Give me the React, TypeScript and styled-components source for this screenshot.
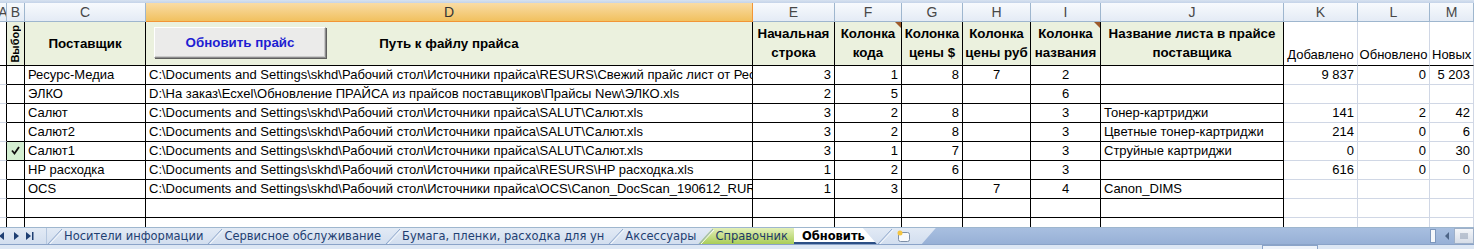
import React from 'react';
import styled, { createGlobalStyle, css } from 'styled-components';

const GlobalStyle = createGlobalStyle`
  html, body {
    margin: 0;
    padding: 0;
    background: #ffffff;
    overflow: hidden;
  }
  body {
    font-family: "Liberation Sans", Arial, sans-serif;
  }
`;

const COLS = [7, 18, 121, 607, 82, 67, 61, 68, 70, 183, 74, 72, 44];
const LETTERS = ['A', 'B', 'C', 'D', 'E', 'F', 'G', 'H', 'I', 'J', 'K', 'L', 'M'];

const Page = styled.div`
  width: 1474px;
  height: 249px;
  display: flex;
  flex-direction: column;
  overflow: hidden;
  background: #fff;
`;

const TopStrip = styled.div`
  height: 3px;
  background: linear-gradient(#d7e2f0, #c4d3e8);
`;

const Grid = styled.div`
  display: grid;
  grid-template-columns: ${COLS.map((c) => `${c}px`).join(' ')};
  grid-template-rows: 19px 44px repeat(8, 19px) 11px;
  overflow: hidden;
`;

const ColHead = styled.div<{ $selected?: boolean }>`
  box-sizing: border-box;
  display: flex;
  align-items: center;
  justify-content: center;
  overflow: hidden;
  font-size: 14px;
  color: #474747;
  border-right: 1px solid #9eb6ce;
  border-bottom: 1px solid #9eb6ce;
  background: linear-gradient(#f7fafd, #e4ebf5);
  ${(p) =>
    p.$selected &&
    css`
      background: linear-gradient(#f9dca5, #f1c15f);
      border-right-color: #f29536;
      border-bottom-color: #f29536;
      color: #333;
    `}
`;

type Edge = 'dark' | 'light';

const Cell = styled.div<{
  $right?: Edge;
  $bottom?: Edge;
  $align?: 'left' | 'right' | 'center';
  $bg?: string;
}>`
  box-sizing: border-box;
  display: flex;
  align-items: flex-end;
  justify-content: ${(p) =>
    p.$align === 'right' ? 'flex-end' : p.$align === 'center' ? 'center' : 'flex-start'};
  padding: 0 3px 1px 3px;
  font-size: 13px;
  line-height: 16px;
  color: #000;
  white-space: nowrap;
  overflow: hidden;
  background: ${(p) => p.$bg || '#fff'};
  border-right: 1px solid ${(p) => (p.$right === 'light' ? '#d0d7e5' : '#000')};
  border-bottom: 1px solid ${(p) => (p.$bottom === 'light' ? '#d0d7e5' : '#000')};
`;

const CheckCell = styled(Cell)`
  padding: 0;
  align-items: center;
  justify-content: center;
`;

const HeadCell = styled.div<{ $plain?: boolean; $cornerMark?: boolean }>`
  position: relative;
  box-sizing: border-box;
  display: flex;
  align-items: center;
  justify-content: center;
  text-align: center;
  padding: 0 2px;
  font-size: 13.33px;
  line-height: 19px;
  font-weight: bold;
  color: #000;
  background: #ebf1de;
  border-right: 1px solid #000;
  border-bottom: 1px solid #000;
  ${(p) =>
    p.$plain &&
    css`
      background: #fff;
      font-weight: normal;
      font-size: 13px;
      align-items: flex-end;
      padding: 0 2px 2px 2px;
      line-height: 16px;
      border-right-color: #d0d7e5;
      white-space: nowrap;
      overflow: hidden;
    `}
  ${(p) =>
    p.$cornerMark &&
    css`
      &::after {
        content: '';
        position: absolute;
        top: 0;
        right: 0;
        border-style: solid;
        border-width: 0 6px 6px 0;
        border-color: transparent #9c5a2a transparent transparent;
      }
    `}
`;

const VerticalLabel = styled.span`
  writing-mode: vertical-rl;
  transform: rotate(180deg);
  font-size: 11px;
  font-weight: bold;
  line-height: 13px;
`;

const UpdateButton = styled.button`
  position: absolute;
  left: 8px;
  top: 5px;
  width: 172px;
  height: 31px;
  box-sizing: border-box;
  font-family: "Liberation Sans", Arial, sans-serif;
  font-size: 13.33px;
  font-weight: bold;
  color: #1e1ed2;
  background: #ebebea;
  border: 1px solid;
  border-color: #ffffff #8c8c8c #8c8c8c #ffffff;
  box-shadow: 1px 1px 0 #5e5e5e, inset -1px -1px 0 #c9c9c9;
  padding: 0;
  cursor: pointer;
`;

/* ---------- sheet tabs ---------- */

const TabBar = styled.div`
  height: 16px;
  display: flex;
  align-items: stretch;
  background: linear-gradient(#e2eaf5, #d2deef);
  border-top: 1px solid #9eb6ce;
  font-family: "DejaVu Sans", Tahoma, sans-serif;
  font-size: 11.5px;
`;

const Nav = styled.div`
  width: 46px;
  display: flex;
  align-items: center;
  gap: 7px;
  border-right: 1px solid #b5c7df;
`;

const Tab = styled.div<{ $kind?: 'normal' | 'green' | 'active' }>`
  display: flex;
  align-items: center;
  padding-right: 4px;
  color: #1f3f72;
  white-space: nowrap;
  line-height: 15px;
  ${(p) =>
    p.$kind === 'green' &&
    css`
      background: linear-gradient(#e3f0b9, #a9cd58);
      clip-path: polygon(14px 0, 100% 0, 100% 100%, 0 100%);
      padding-right: 8px;
      margin-left: -2px;
      color: #1e3a66;
    `}
  ${(p) =>
    p.$kind === 'active' &&
    css`
      background: #fff;
      color: #000;
      font-weight: bold;
      padding-right: 12px;
      margin-left: -2px;
      clip-path: polygon(0 0, calc(100% - 14px) 0, 100% 100%, 0 100%);
      box-shadow: inset 0 -2px 0 #2c4f86;
    `}
`;

const ActiveGap = styled.span`
  width: 8px;
`;

const TabFill = styled.div`
  flex: 1;
  background: linear-gradient(#a8bfe0, #97b0d6);
  margin-left: 4px;
  clip-path: polygon(14px 0, 100% 0, 100% 100%, 0 100%);
`;

const ScrollArea = styled.div`
  width: 46px;
  display: flex;
  align-items: center;
  background: linear-gradient(#a8bfe0, #97b0d6);
`;

const Splitter = styled.div`
  width: 4px;
  height: 12px;
  margin-left: 2px;
  background: #f4f7fb;
  border: 1px solid #7d97bd;
`;

const ScrollBtn = styled.div`
  width: 18px;
  height: 14px;
  margin-left: auto;
  background: linear-gradient(#f4f6f9, #d6dde8);
  border: 1px solid #9eb0c9;
  display: flex;
  align-items: center;
  justify-content: center;
`;

const StatusStrip = styled.div`
  flex: 1;
  background: #dde7f4;
  border-top: 1px solid #8aa3c8;
  display: flex;
  align-items: flex-start;
`;

const StatusBox = styled.div<{ $left: number; $width: number }>`
  margin-left: ${(p) => p.$left}px;
  width: ${(p) => p.$width}px;
  height: 3px;
  border: 1px solid #8aa3c8;
  border-bottom: 0;
  background: #eef3fa;
`;

const Slant = () => (
  <svg width="17" height="16" viewBox="0 0 17 16" style={{ flexShrink: 0 }}>
    <line x1="1" y1="16" x2="15" y2="1" stroke="#8fa8cc" strokeWidth="1" />
    <line x1="3" y1="16" x2="16" y2="2" stroke="#f5f8fc" strokeWidth="1" />
  </svg>
);

const NewSheetIcon = () => (
  <svg width="20" height="14" viewBox="0 0 20 14">
    <rect x="4.5" y="3.5" width="11" height="9" rx="2" fill="#f7f9fc" stroke="#7d8fa8" />
    <circle cx="6" cy="4" r="2.5" fill="#f4c542" />
  </svg>
);

const Check = () => (
  <svg width="9" height="9" viewBox="0 0 9 9">
    <path d="M1 4.5 L3.5 7.5 L8 1" fill="none" stroke="#111" strokeWidth="1.8" />
  </svg>
);

type Row = {
  b?: boolean;
  c: string;
  d: string;
  e?: string;
  f?: string;
  g?: string;
  h?: string;
  i?: string;
  j?: string;
  k?: string;
  l?: string;
  m?: string;
};

const ROOT = 'C:\\Documents and Settings\\skhd\\Рабочий стол\\Источники прайса\\';

const ROWS: Row[] = [
  { c: 'Ресурс-Медиа', d: ROOT + 'RESURS\\Свежий прайс лист от Ресурс-Медиа.xls', e: '3', f: '1', g: '8', h: '7', i: '2', k: '9 837', l: '0', m: '5 203' },
  { c: 'ЭЛКО', d: 'D:\\На заказ\\Ecxel\\Обновление ПРАЙСА из прайсов поставщиков\\Прайсы New\\ЭЛКО.xls', e: '2', f: '5', i: '6' },
  { c: 'Салют', d: ROOT + 'SALUT\\Салют.xls', e: '3', f: '2', g: '8', i: '3', j: 'Тонер-картриджи', k: '141', l: '2', m: '42' },
  { c: 'Салют2', d: ROOT + 'SALUT\\Салют.xls', e: '3', f: '2', g: '8', i: '3', j: 'Цветные тонер-картриджи', k: '214', l: '0', m: '6' },
  { b: true, c: 'Салют1', d: ROOT + 'SALUT\\Салют.xls', e: '3', f: '1', g: '7', i: '3', j: 'Струйные картриджи', k: '0', l: '0', m: '30' },
  { c: 'HP расходка', d: ROOT + 'RESURS\\HP расходка.xls', e: '1', f: '2', g: '6', i: '3', k: '616', l: '0', m: '0' },
  { c: 'OCS', d: ROOT + 'OCS\\Canon_DocScan_190612_RUR.xls', e: '1', f: '3', h: '7', i: '4', j: 'Canon_DIMS' },
  { c: '', d: '' },
  { c: '', d: '' },
];

const DataRow = ({ row, last }: { row: Row; last?: boolean }) => {
  const bottom: Edge = last ? 'light' : 'dark';
  return (
    <>
      <Cell $right="dark" $bottom="light" />
      <CheckCell $bottom={bottom} $bg={row.b ? '#d4efd2' : undefined}>
        {row.b && <Check />}
      </CheckCell>
      <Cell $bottom={bottom}>{row.c}</Cell>
      <Cell $bottom={bottom}>{row.d}</Cell>
      <Cell $bottom={bottom} $align="right">{row.e}</Cell>
      <Cell $bottom={bottom} $align="right">{row.f}</Cell>
      <Cell $bottom={bottom} $align="right">{row.g}</Cell>
      <Cell $bottom={bottom} $align="center">{row.h}</Cell>
      <Cell $bottom={bottom} $align="center">{row.i}</Cell>
      <Cell $bottom={bottom}>{row.j}</Cell>
      <Cell $right="light" $bottom="light" $align="right">{row.k}</Cell>
      <Cell $right="light" $bottom="light" $align="right">{row.l}</Cell>
      <Cell $right="light" $bottom="light" $align="right">{row.m}</Cell>
    </>
  );
};

const TwoLine = ({ a, b }: { a: string; b: string }) => (
  <span>
    {a}
    <br />
    {b}
  </span>
);

export default function App() {
  return (
    <Page>
      <GlobalStyle />
      <TopStrip />
      <Grid>
        {LETTERS.map((l) => (
          <ColHead key={l} $selected={l === 'D'}>
            {l}
          </ColHead>
        ))}

        <Cell $right="dark" $bottom="dark" />
        <HeadCell>
          <VerticalLabel>Выбор</VerticalLabel>
        </HeadCell>
        <HeadCell>Поставщик</HeadCell>
        <HeadCell>
          <UpdateButton>Обновить прайс</UpdateButton>
          Путь к файлу прайса
        </HeadCell>
        <HeadCell>
          <TwoLine a="Начальная" b="строка" />
        </HeadCell>
        <HeadCell $cornerMark>
          <TwoLine a="Колонка" b="кода" />
        </HeadCell>
        <HeadCell>
          <TwoLine a="Колонка" b="цены $" />
        </HeadCell>
        <HeadCell>
          <TwoLine a="Колонка" b="цены руб" />
        </HeadCell>
        <HeadCell $cornerMark>
          <TwoLine a="Колонка" b="названия" />
        </HeadCell>
        <HeadCell>
          <TwoLine a="Название листа в прайсе" b="поставщика" />
        </HeadCell>
        <HeadCell $plain>Добавлено</HeadCell>
        <HeadCell $plain>Обновлено</HeadCell>
        <HeadCell $plain style={{ justifyContent: 'flex-start' }}>Новых</HeadCell>

        {ROWS.map((r, i) => (
          <DataRow key={i} row={r} last={i === ROWS.length - 1} />
        ))}
      </Grid>

      <TabBar>
        <Nav>
          <svg width="6" height="8" viewBox="0 0 6 8">
            <path d="M4 0 L-1 4 L4 8 Z" fill="#1f3f73" />
          </svg>
          <svg width="6" height="8" viewBox="0 0 6 8">
            <path d="M1 0 L6 4 L1 8 Z" fill="#1f3f73" />
          </svg>
          <svg width="8" height="8" viewBox="0 0 8 8">
            <path d="M0 0 L5 4 L0 8 Z" fill="#1f3f73" />
            <rect x="6" y="0" width="1.5" height="8" fill="#1f3f73" />
          </svg>
        </Nav>
        <Tab>
          <Slant />
          Носители информации
        </Tab>
        <Tab>
          <Slant />
          Сервисное обслуживание
        </Tab>
        <Tab>
          <Slant />
          Бумага, пленки, расходка для ун
        </Tab>
        <Tab>
          <Slant />
          Аксессуары
        </Tab>
        <Tab $kind="green">
          <Slant />
          Справочник
        </Tab>
        <Tab $kind="active">
          <ActiveGap />
          Обновить
        </Tab>
        <Tab>
          <Slant />
          <NewSheetIcon />
        </Tab>
        <TabFill />
        <ScrollArea>
          <Splitter />
          <svg width="8" height="10" viewBox="0 0 8 10" style={{ marginLeft: 7 }}>
            <path d="M6 1 L2 5 L6 9 Z" fill="#4d6587" />
          </svg>
          <ScrollBtn>
            <svg width="9" height="6" viewBox="0 0 9 6">
              <path d="M1 0V6M3 0V6M5 0V6M7 0V6" stroke="#8d9bb0" strokeWidth="1" />
            </svg>
          </ScrollBtn>
        </ScrollArea>
      </TabBar>
      <StatusStrip>
        <StatusBox $left={1262} $width={54} />
      </StatusStrip>
    </Page>
  );
}
